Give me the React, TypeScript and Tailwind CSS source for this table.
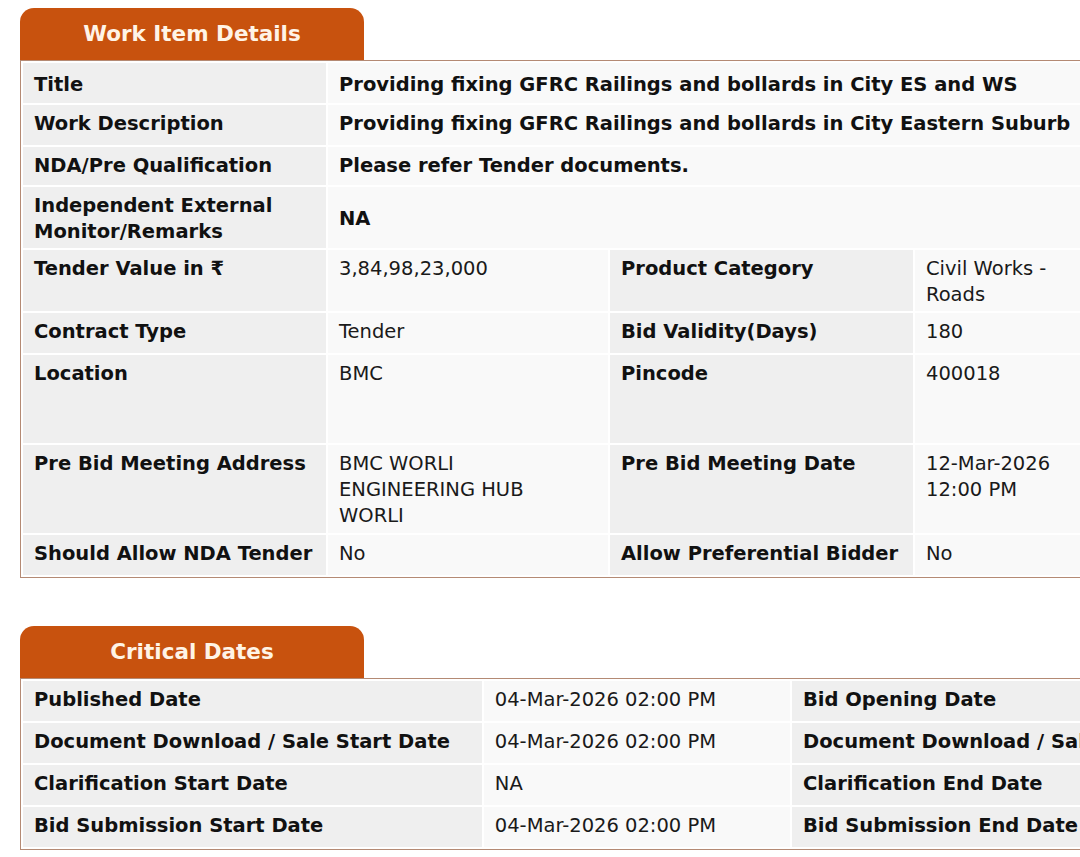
import React from "react"

type Cell = { text: React.ReactNode; label?: boolean; span?: number; middle?: boolean; nowrap?: boolean }
type Row = { h: string; cells: Cell[] }

const workRows: Row[] = [
  {
    h: "h-[40px]",
    cells: [
      { text: "Title", label: true, middle: true },
      { text: "Providing fixing GFRC Railings and bollards in City ES and WS", span: 3, nowrap: true, label: true, middle: true },
    ],
  },
  {
    h: "h-[40px]",
    cells: [
      { text: "Work Description", label: true },
      { text: "Providing fixing GFRC Railings and bollards in City Eastern Suburb", span: 3, nowrap: true, label: true },
    ],
  },
  {
    h: "h-[38px]",
    cells: [
      { text: "NDA/Pre Qualification", label: true },
      { text: "Please refer Tender documents.", span: 3, nowrap: true, label: true },
    ],
  },
  {
    h: "h-[61px]",
    cells: [
      { text: <>Independent External<br />Monitor/Remarks</>, label: true },
      { text: "NA", span: 3, label: true, middle: true },
    ],
  },
  {
    h: "h-[60px]",
    cells: [
      { text: "Tender Value in ₹", label: true },
      { text: "3,84,98,23,000" },
      { text: "Product Category", label: true },
      { text: "Civil Works - Roads" },
    ],
  },
  {
    h: "h-[40px]",
    cells: [
      { text: "Contract Type", label: true },
      { text: "Tender" },
      { text: "Bid Validity(Days)", label: true },
      { text: "180" },
    ],
  },
  {
    h: "h-[88px]",
    cells: [
      { text: "Location", label: true },
      { text: "BMC" },
      { text: "Pincode", label: true },
      { text: "400018" },
    ],
  },
  {
    h: "h-[88px]",
    cells: [
      { text: "Pre Bid Meeting Address", label: true },
      { text: <>BMC WORLI<br />ENGINEERING HUB<br />WORLI</> },
      { text: "Pre Bid Meeting Date", label: true },
      { text: "12-Mar-2026 12:00 PM" },
    ],
  },
  {
    h: "h-[40px]",
    cells: [
      { text: "Should Allow NDA Tender", label: true, nowrap: true },
      { text: "No" },
      { text: "Allow Preferential Bidder", label: true, nowrap: true },
      { text: "No" },
    ],
  },
]

const dateRows: [string, string, string][] = [
  ["Published Date", "04-Mar-2026 02:00 PM", "Bid Opening Date"],
  ["Document Download / Sale Start Date", "04-Mar-2026 02:00 PM", "Document Download / Sale End Date"],
  ["Clarification Start Date", "NA", "Clarification End Date"],
  ["Bid Submission Start Date", "04-Mar-2026 02:00 PM", "Bid Submission End Date"],
]

function Tab({ title }: { title: string }) {
  return (
    <div className="w-[344px] h-[52px] rounded-t-[14px] bg-[#c8520e] flex items-center justify-center text-[21.5px] font-bold text-[#fff4e6]">
      {title}
    </div>
  )
}

export default function App() {
  return (
    <div className="w-[1080px] h-[857px] overflow-hidden bg-white pt-[8px] pl-[20px] font-['DejaVu_Sans',sans-serif] text-[19.5px] leading-[26px] text-[#1a1a1a]">
      {/* Work item details */}
      <Tab title="Work Item Details" />
      <table className="table-fixed w-[1078px] border border-[#b48a74] border-separate border-spacing-[2px]">
        <colgroup>
          <col className="w-[303px]" />
          <col className="w-[280px]" />
          <col className="w-[303px]" />
          <col className="w-[180px]" />
        </colgroup>
        <tbody>
          {workRows.map((row, i) => (
            <tr key={i} className={row.h}>
              {row.cells.map((c, j) => (
                <td
                  key={j}
                  colSpan={c.span}
                  className={`px-[11px] pt-[6px] pb-[3px] ${c.middle ? "align-middle" : "align-top"} ${
                    c.nowrap ? "whitespace-nowrap" : ""
                  } ${j % 2 === 0 ? "bg-[#efefef]" : "bg-[#f9f9f9]"} ${c.label ? "font-bold text-[#111]" : ""}`}
                >
                  {c.text}
                </td>
              ))}
            </tr>
          ))}
        </tbody>
      </table>

      {/* Critical dates */}
      <div className="mt-[48px]">
        <Tab title="Critical Dates" />
        <table className="table-fixed w-[1540px] border border-[#b48a74] border-separate border-spacing-[2px]">
          <colgroup>
            <col className="w-[457px]" />
            <col className="w-[305px]" />
            <col className="w-[460px]" />
            <col className="w-[300px]" />
          </colgroup>
          <tbody>
            {dateRows.map(([a, b, c], i) => (
              <tr key={i} className="h-[40px]">
                <td className="px-[11px] pt-[6px] pb-[3px] align-top whitespace-nowrap bg-[#efefef] font-bold text-[#111]">{a}</td>
                <td className="px-[11px] pt-[6px] pb-[3px] align-top whitespace-nowrap bg-[#f9f9f9]">{b}</td>
                <td className="px-[11px] pt-[6px] pb-[3px] align-top whitespace-nowrap bg-[#efefef] font-bold text-[#111]">{c}</td>
                <td className="px-[11px] pt-[6px] pb-[3px] align-top whitespace-nowrap bg-[#f9f9f9]">04-Mar-2026 02:00 PM</td>
              </tr>
            ))}
          </tbody>
        </table>
      </div>
    </div>
  )
}
